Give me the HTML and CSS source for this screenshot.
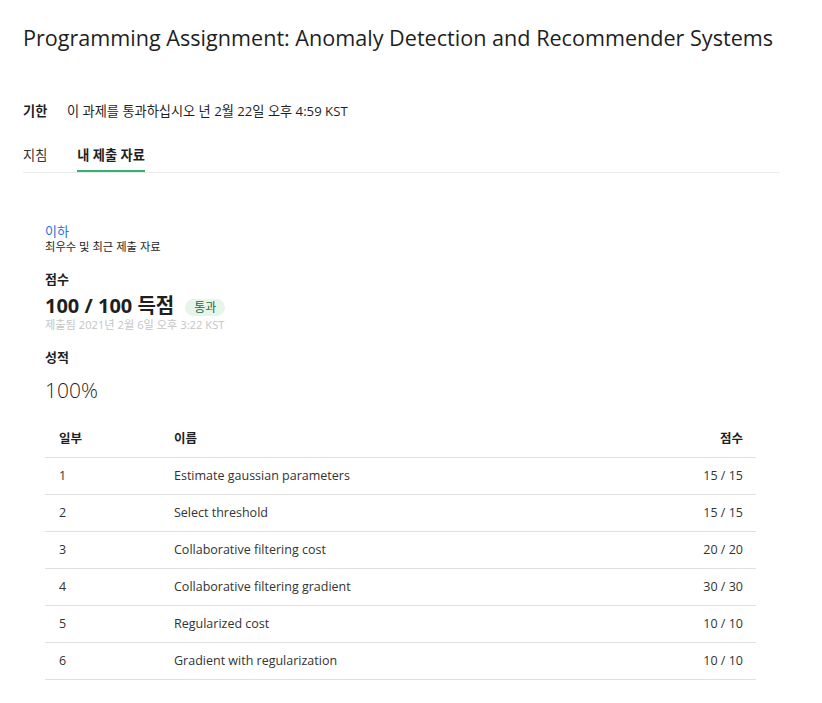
FILE: index.html
```html
<!DOCTYPE html>
<html lang="ko">
<head>
<meta charset="utf-8">
<link rel="stylesheet" href="styles.css">
</head>
<body>
<div class="page">
  <h1 class="title">Programming Assignment: Anomaly Detection and Recommender Systems</h1>
  <div class="due"><span class="due-label">기한</span><span class="due-text">이 과제를 통과하십시오 년 2월 22일 오후 4:59 KST</span></div>
  <div class="tabs">
    <span class="tab">지침</span>
    <span class="tab active">내 제출 자료</span>
  </div>
  <div class="content">
    <a class="link">이하</a>
    <div class="small">최우수 및 최근 제출 자료</div>
    <div class="label score-label">점수</div>
    <div class="score-row"><span class="score">100 / 100 득점</span><span class="badge">통과</span></div>
    <div class="submitted">제출됨 2021년 2월 6일 오후 3:22 KST</div>
    <div class="label grade-label">성적</div>
    <div class="grade">100%</div>
    <table class="parts">
      <thead><tr><th class="c-num">일부</th><th class="c-name">이름</th><th class="c-score">점수</th></tr></thead>
      <tbody>
        <tr><td class="c-num">1</td><td class="c-name">Estimate gaussian parameters</td><td class="c-score">15 / 15</td></tr>
        <tr><td class="c-num">2</td><td class="c-name">Select threshold</td><td class="c-score">15 / 15</td></tr>
        <tr><td class="c-num">3</td><td class="c-name">Collaborative filtering cost</td><td class="c-score">20 / 20</td></tr>
        <tr><td class="c-num">4</td><td class="c-name">Collaborative filtering gradient</td><td class="c-score">30 / 30</td></tr>
        <tr><td class="c-num">5</td><td class="c-name">Regularized cost</td><td class="c-score">10 / 10</td></tr>
        <tr><td class="c-num">6</td><td class="c-name">Gradient with regularization</td><td class="c-score">10 / 10</td></tr>
      </tbody>
    </table>
  </div>
</div>
</body>
</html>
```
FILE: styles.css
```css
* { box-sizing: border-box; }
body {
  margin: 0;
  background: #fff;
  font-family: "Open Sans", "Noto Sans CJK KR", sans-serif;
  color: #1f1f1f;
}
.page {
  width: 780px;
  padding: 22px 0 0 23px;
}
.title {
  margin: 0;
  font-size: 21.6px;
  font-weight: 400;
  line-height: 32px;
  color: #1f1f1f;
  white-space: nowrap;
}
.due {
  margin-top: 48px;
  font-size: 13.2px;
  line-height: 18px;
  display: flex;
}
.due-label { font-weight: 700; width: 44px; }
.due-text { color: #1f1f1f; }
.tabs {
  margin-top: 26px;
  display: flex;
  gap: 30px;
  border-bottom: 1px solid #ebebeb;
  height: 27px;
  width: 757px;
}
.tab {
  font-size: 13.2px;
  line-height: 18px;
  color: #333;
  height: 26px;
}
.tab.active {
  font-weight: 700;
  color: #1f1f1f;
  border-bottom: 2px solid #2fb36d;
}
.content {
  padding: 49px 0 0 22px;
  width: 733px;
}
.link {
  display: block;
  color: #2a6fdb;
  font-size: 13px;
  line-height: 18px;
}
.small {
  font-size: 11.3px;
  line-height: 14px;
  color: #1f1f1f;
}
.label {
  font-size: 13px;
  font-weight: 700;
  line-height: 18px;
}
.score-label { margin-top: 16px; }
.score-row {
  display: flex;
  align-items: center;
  gap: 11px;
  margin-top: 8px;
  height: 20px;
}
.score {
  font-size: 20px;
  font-weight: 700;
  line-height: 20px;
}
.badge {
  background: #e6f4ea;
  color: #1e6b3a;
  font-size: 12px;
  border-radius: 10px;
  padding: 0 9px;
  line-height: 17px;
  margin-top: 2px;
}
.submitted {
  margin-top: 2px;
  font-size: 11.2px;
  color: #c5c5c5;
  line-height: 13px;
}
.grade-label { margin-top: 17px; }
.grade {
  margin-top: 12px;
  font-size: 21px;
  font-weight: 300;
  line-height: 24px;
  color: #1f1f1f;
}
.parts {
  margin-top: 16px;
  width: 711px;
  border-collapse: collapse;
  font-size: 12.5px;
}
.parts th {
  font-weight: 700;
  text-align: left;
  height: 39px;
  border-bottom: 1px solid #e0e0e0;
  padding: 0;
  color: #1f1f1f;
}
.parts td {
  height: 37px;
  border-bottom: 1px solid #e0e0e0;
  padding: 0;
  color: #333;
}
.c-num { padding-left: 14px !important; width: 129px; }
.c-score { text-align: right !important; padding-right: 13px !important; }
```
